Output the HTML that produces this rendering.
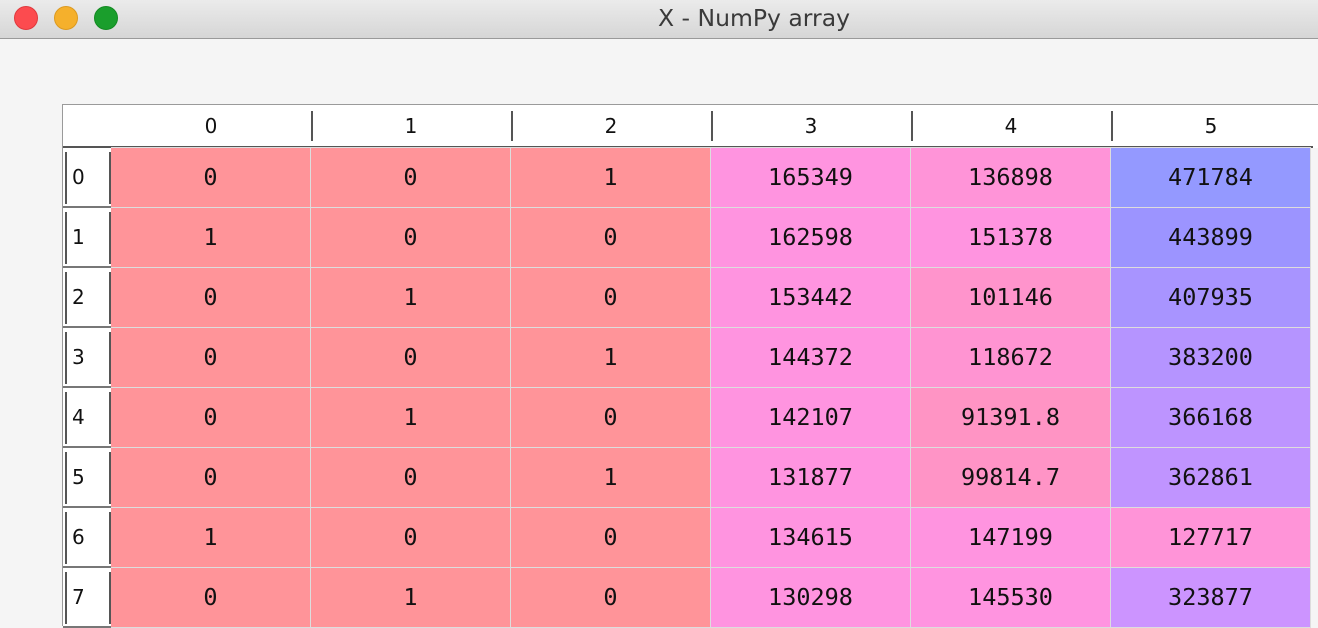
<!DOCTYPE html>
<html><head><style>
*{margin:0;padding:0;box-sizing:border-box}
body{width:1318px;height:626px;overflow:hidden;background:#f5f5f5;position:relative;font-family:"DejaVu Sans","Liberation Sans",sans-serif}
.tb{position:absolute;left:0;top:0;width:1318px;height:39px;background:linear-gradient(#ebebeb,#d6d6d6);border-bottom:1px solid #9a9a9a}
.dot{position:absolute;top:6px;width:24px;height:24px;border-radius:50%}
.title{position:absolute;left:0;top:4px;width:1508px;text-align:center;font-size:23.5px;color:#3a3a3a}
.tbl{position:absolute;left:62px;top:104px;width:1256px;height:522px;border-left:1px solid #9a9a9a;border-top:1px solid #9a9a9a;background:#fff}
.hd{position:absolute;top:0;height:42px;width:200px;text-align:center;font-size:20px;line-height:42px;color:#111}
.sep{position:absolute;top:6px;width:2px;height:30px;background:#555}
.hline{position:absolute;left:0;top:41px;width:1250px;height:2px;background:#555}
.c{position:absolute;width:199px;height:59px;text-align:center;line-height:59px;font-family:"DejaVu Sans Mono","Liberation Mono",monospace;font-size:23.5px;color:#111}
.rh{position:absolute;left:0;width:48px;height:59px;line-height:59px;font-size:20px;padding-left:9px;color:#111}
.rh:before{content:"";position:absolute;left:2px;top:4px;width:2px;height:52px;background:#555}
.rh:after{content:"";position:absolute;right:0;top:4px;width:2px;height:52px;background:#555}
</style></head><body>
<div class="tb">
<div class="dot" style="left:14px;background:#fc4b4f;border:1px solid #e0393d"></div>
<div class="dot" style="left:54px;background:#f5b02c;border:1px solid #dc9a20"></div>
<div class="dot" style="left:94px;background:#1a9e2c;border:1px solid #138a22"></div>
<div class="title">X - NumPy array</div>
</div>
<div class="tbl">
<div class="hd" style="left:48px">0</div>
<div class="hd" style="left:248px">1</div>
<div class="hd" style="left:448px">2</div>
<div class="hd" style="left:648px">3</div>
<div class="hd" style="left:848px">4</div>
<div class="hd" style="left:1048px">5</div>
<div class="sep" style="left:248px"></div><div class="sep" style="left:448px"></div><div class="sep" style="left:648px"></div><div class="sep" style="left:848px"></div><div class="sep" style="left:1048px"></div>
<div class="hline"></div>
<div style="position:absolute;left:1248px;top:43px;width:10px;height:480px;background:#f5f5f5"></div>
</div>
<div id="g" style="position:absolute;left:0;top:0;width:1318px;height:626px;background:transparent"></div>
<script>
var d=[["0","0","1","165349","136898","471784"],["1","0","0","162598","151378","443899"],["0","1","0","153442","101146","407935"],["0","0","1","144372","118672","383200"],["0","1","0","142107","91391.8","366168"],["0","0","1","131877","99814.7","362861"],["1","0","0","134615","147199","127717"],["0","1","0","130298","145530","323877"]];
var c4=["#ff94d8","#ff94e0","#ff94cc","#ff94d2","#ff94c4","#ff94c6","#ff94e0","#ff94e0"];
var c5=["#9499ff","#9c94ff","#a894ff","#b594ff","#bd94ff","#c094ff","#ff94d8","#cc94ff"];
var h="";
for(var r=0;r<8;r++){var y=148+r*60;
h+='<div style="position:absolute;left:111px;top:'+(y-1)+'px;width:1200px;height:61px;background:#ddd"></div>';
h+='<div class="rh" style="left:63px;top:'+y+'px;background:#fff">'+r+'</div>';
h+='<div style="position:absolute;left:63px;top:'+(y+58)+'px;width:48px;height:2px;background:#777"></div>';
for(var k=0;k<6;k++){var bg=k<3?"#ff9499":k==3?"#ff94e0":k==4?c4[r]:c5[r];
h+='<div class="c" style="left:'+(111+k*200)+'px;top:'+y+'px;background:'+bg+'">'+d[r][k]+'</div>';}}
document.getElementById("g").innerHTML=h;
</script>
</body></html>
